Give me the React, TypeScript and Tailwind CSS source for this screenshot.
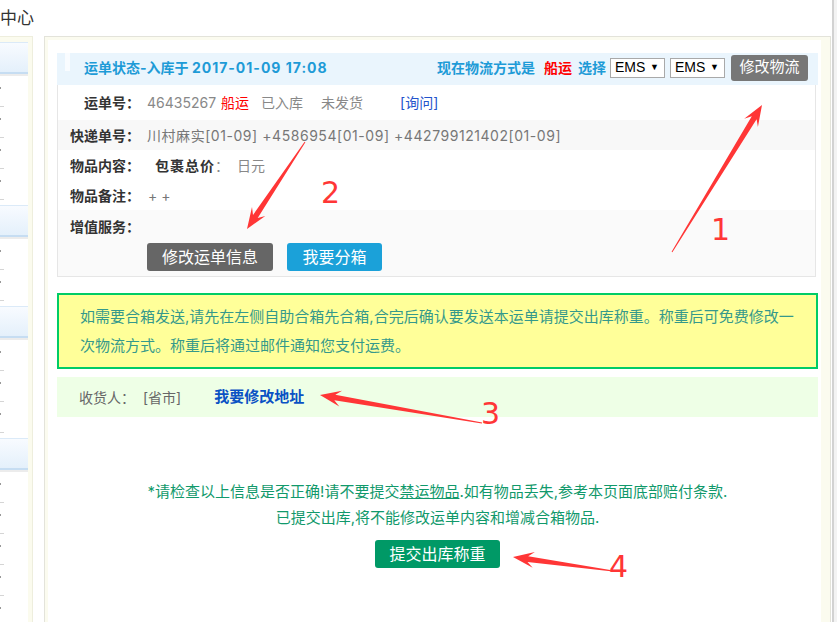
import React from 'react'

const FONT = "font-['Inter','Noto_Sans_CJK_SC',sans-serif]"

type Pt = [number, number]

// tapered annotation arrow: thin tail, notched head at the tip
function arrowPoints(tail: Pt, tip: Pt) {
  const [x1, y1] = tail
  const [x2, y2] = tip
  const dx = x2 - x1
  const dy = y2 - y1
  const len = Math.hypot(dx, dy)
  const ux = dx / len
  const uy = dy / len
  const nx = -uy
  const ny = ux
  const headLen = 21
  const headHalf = 8
  const neckLen = 15
  const neckHalf = 2.8
  const tailHalf = 0.5
  const at = (back: number, side: number) =>
    `${(x2 - ux * back + nx * side).toFixed(1)},${(y2 - uy * back + ny * side).toFixed(1)}`
  return [
    `${(x1 + nx * tailHalf).toFixed(1)},${(y1 + ny * tailHalf).toFixed(1)}`,
    at(neckLen, neckHalf),
    at(headLen, headHalf),
    at(0, 0),
    at(headLen, -headHalf),
    at(neckLen, -neckHalf),
    `${(x1 - nx * tailHalf).toFixed(1)},${(y1 - ny * tailHalf).toFixed(1)}`,
  ].join(' ')
}

const arrows: { tail: Pt; tip: Pt; label: string; lx: number; ly: number }[] = [
  { tail: [672, 252], tip: [762, 105], label: '1', lx: 711, ly: 240 },
  { tail: [305, 142], tip: [247, 229], label: '2', lx: 321, ly: 203 },
  { tail: [482, 423], tip: [320, 395], label: '3', lx: 481, ly: 424 },
  { tail: [613, 571], tip: [513, 557], label: '4', lx: 609, ly: 577 },
]

function SideGroup({ rows }: { rows: number }) {
  return (
    <div className="mb-[5px]">
      <div className="h-[32px] border-t border-[#dbeaf8] border-b-2 border-b-[#c6ddf2] bg-gradient-to-b from-[#f8fbff] to-[#e4f0fb]" />
      <div className="h-[2px] bg-[#ececec]" />
      {Array.from({ length: rows }).map((_, i) => (
        <div key={i} className="h-[31px] flex flex-col justify-between">
          <div className="mt-[11px] w-[1px] h-[2px] bg-[#999]" />
          <div className="w-[4px] h-[1px] bg-[#d5d5d5]" />
        </div>
      ))}
    </div>
  )
}

function EmsSelect() {
  return (
    <div className="w-[55px] h-[20px] border border-[#a9a9a9] bg-white flex items-center justify-between pl-[4px] pr-[5px] font-['Liberation_Sans',sans-serif] font-normal text-[14px] text-black">
      <span>EMS</span>
      <span className="text-[9px]">▼</span>
    </div>
  )
}

function Label({ children }: { children: React.ReactNode }) {
  return <div className="w-[82px] shrink-0 text-right font-bold text-[#333]">{children}</div>
}

export default function App() {
  return (
    <div className={`relative w-[837px] h-[622px] overflow-hidden bg-white flex ${FONT} text-[14px]`}>
      <div className="flex-1 flex flex-col">
        {/* top title strip */}
        <div className="h-[39px] leading-[36px] text-[17px] text-[#333]">中心</div>

        <div className="flex flex-1">
          {/* left menu */}
          <div className="w-[33px] border-t border-r border-[#eeeedd] bg-[#fbfbee] pt-[5px] pr-[4px]">
            <div className="h-full bg-white">
              <SideGroup rows={4} />
              <SideGroup rows={2} />
              <SideGroup rows={3} />
              <SideGroup rows={5} />
            </div>
          </div>

          <div className="w-[11px]" />

          {/* main panel */}
          <div className="flex-1 mr-[1px] border-t border-l border-r border-[#e3e3da] bg-[#fbfbef] pl-[3px] pt-[3px] pr-[9px]">
            <div className="h-full bg-white pl-[9px] pr-[3px] pt-[13px]">
              {/* status header */}
              <div className="h-[32px] bg-[#eaf5fd] flex items-center pr-[10px] pb-[3px]">
                <div className="self-start ml-[8px] w-[5px] h-[18px] bg-[#f9fcff]" />
                <div className="ml-[14px] font-bold text-[#1e9bd7]">
                  运单状态-入库于 <span className="tracking-[1px]">2017-01-09 17:08</span>
                </div>
                <div className="ml-auto flex items-center font-bold text-[#1e9bd7]">
                  <span>现在物流方式是</span>
                  <span className="ml-[9px] text-[#ff0000]">船运</span>
                  <span className="ml-[6px]">选择</span>
                  <div className="ml-[4px]"><EmsSelect /></div>
                  <div className="ml-[5px]"><EmsSelect /></div>
                  <div className="ml-[6px] w-[77px] h-[26px] rounded-[3px] bg-[#777] text-white font-normal text-[15px] flex items-center justify-center">修改物流</div>
                </div>
              </div>

              {/* waybill table */}
              <div className="mr-[2px] border border-[#e6e6e6] border-t-0">
                <div className="h-[35px] flex items-center bg-white">
                  <Label>运单号：</Label>
                  <div className="pl-[7px] flex items-center text-[#888]">
                    <span>46435267</span>
                    <span className="ml-[5px] text-[#ff0000]">船运</span>
                    <span className="ml-[12px]">已入库</span>
                    <span className="ml-[18px]">未发货</span>
                    <span className="ml-[37px] text-[#2253cc]">[询问]</span>
                  </div>
                </div>
                <div className="h-[30px] flex items-center bg-[#f8f8f8]">
                  <Label>快递单号：</Label>
                  <div className="pl-[7px] text-[#777] tracking-[0.55px]">川村麻实[01-09] +4586954[01-09] +442799121402[01-09]</div>
                </div>
                <div className="h-[30px] flex items-center bg-white">
                  <Label>物品内容：</Label>
                  <div className="pl-[15px] flex items-center text-[#888]">
                    <span className="font-bold text-[#333] tracking-[1px]">包裹总价</span>
                    <span>：</span>
                    <span className="ml-[8px]">日元</span>
                  </div>
                </div>
                <div className="h-[30px] flex items-center bg-white">
                  <Label>物品备注：</Label>
                  <div className="pl-[8px] text-[#777]">+ +</div>
                </div>
                <div className="h-[66px] bg-[#fafafa] pt-[3px]">
                  <div className="h-[26px] flex items-center">
                    <Label>增值服务：</Label>
                  </div>
                  <div className="mt-[4px] ml-[89px] flex gap-[14px] text-[16px] text-white">
                    <div className="h-[28px] w-[126px] rounded-[3px] bg-[#666] flex items-center justify-center">修改运单信息</div>
                    <div className="h-[28px] w-[95px] rounded-[3px] bg-[#1ba1d9] flex items-center justify-center">我要分箱</div>
                  </div>
                </div>
              </div>

              {/* notice */}
              <div className="mt-[16px] border-2 border-[#00cc66] bg-[#ffff99] pl-[21px] py-[7px] text-[15px] leading-[29px] text-[#35998b]">
                如需要合箱发送,请先在左侧自助合箱先合箱,合完后确认要发送本运单请提交出库称重。称重后可免费修改一
                <br />
                次物流方式。称重后将通过邮件通知您支付运费。
              </div>

              {/* receiver */}
              <div className="mt-[8px] h-[40px] bg-[#eeffe6] pl-[22px] flex items-center">
                <span className="text-[#666]">收货人：</span>
                <span className="ml-[8px] text-[#666]">[省市]</span>
                <span className="ml-[33px] font-bold text-[15px] text-[#0a52c4]">我要修改地址</span>
              </div>

              {/* submit */}
              <div className="mt-[62px] flex flex-col items-center text-[15px] text-[#11996b] leading-[26px]">
                <div>
                  *请检查以上信息是否正确!请不要提交<span className="underline">禁运物品</span>.如有物品丢失,参考本页面底部赔付条款.
                </div>
                <div>已提交出库,将不能修改运单内容和增减合箱物品.</div>
                <div className="mt-[9px] h-[28px] w-[125px] rounded-[3px] bg-[#009966] text-white text-[16px] flex items-center justify-center">提交出库称重</div>
              </div>
            </div>
          </div>
        </div>
      </div>

      {/* window edge */}
      <div className="w-[5px] border-l-2 border-[#d2d2d2] bg-[#f3f3f3]" />

      {/* red annotations */}
      <svg className="absolute left-0 top-0 pointer-events-none" width="837" height="622" viewBox="0 0 837 622">
        {arrows.map((a) => (
          <g key={a.label}>
            <polygon points={arrowPoints(a.tail, a.tip)} fill="#ff3636" />
            <text x={a.lx} y={a.ly} fill="#ff3636" fontSize="30" fontFamily="DejaVu Sans, sans-serif">
              {a.label}
            </text>
          </g>
        ))}
      </svg>
    </div>
  )
}
